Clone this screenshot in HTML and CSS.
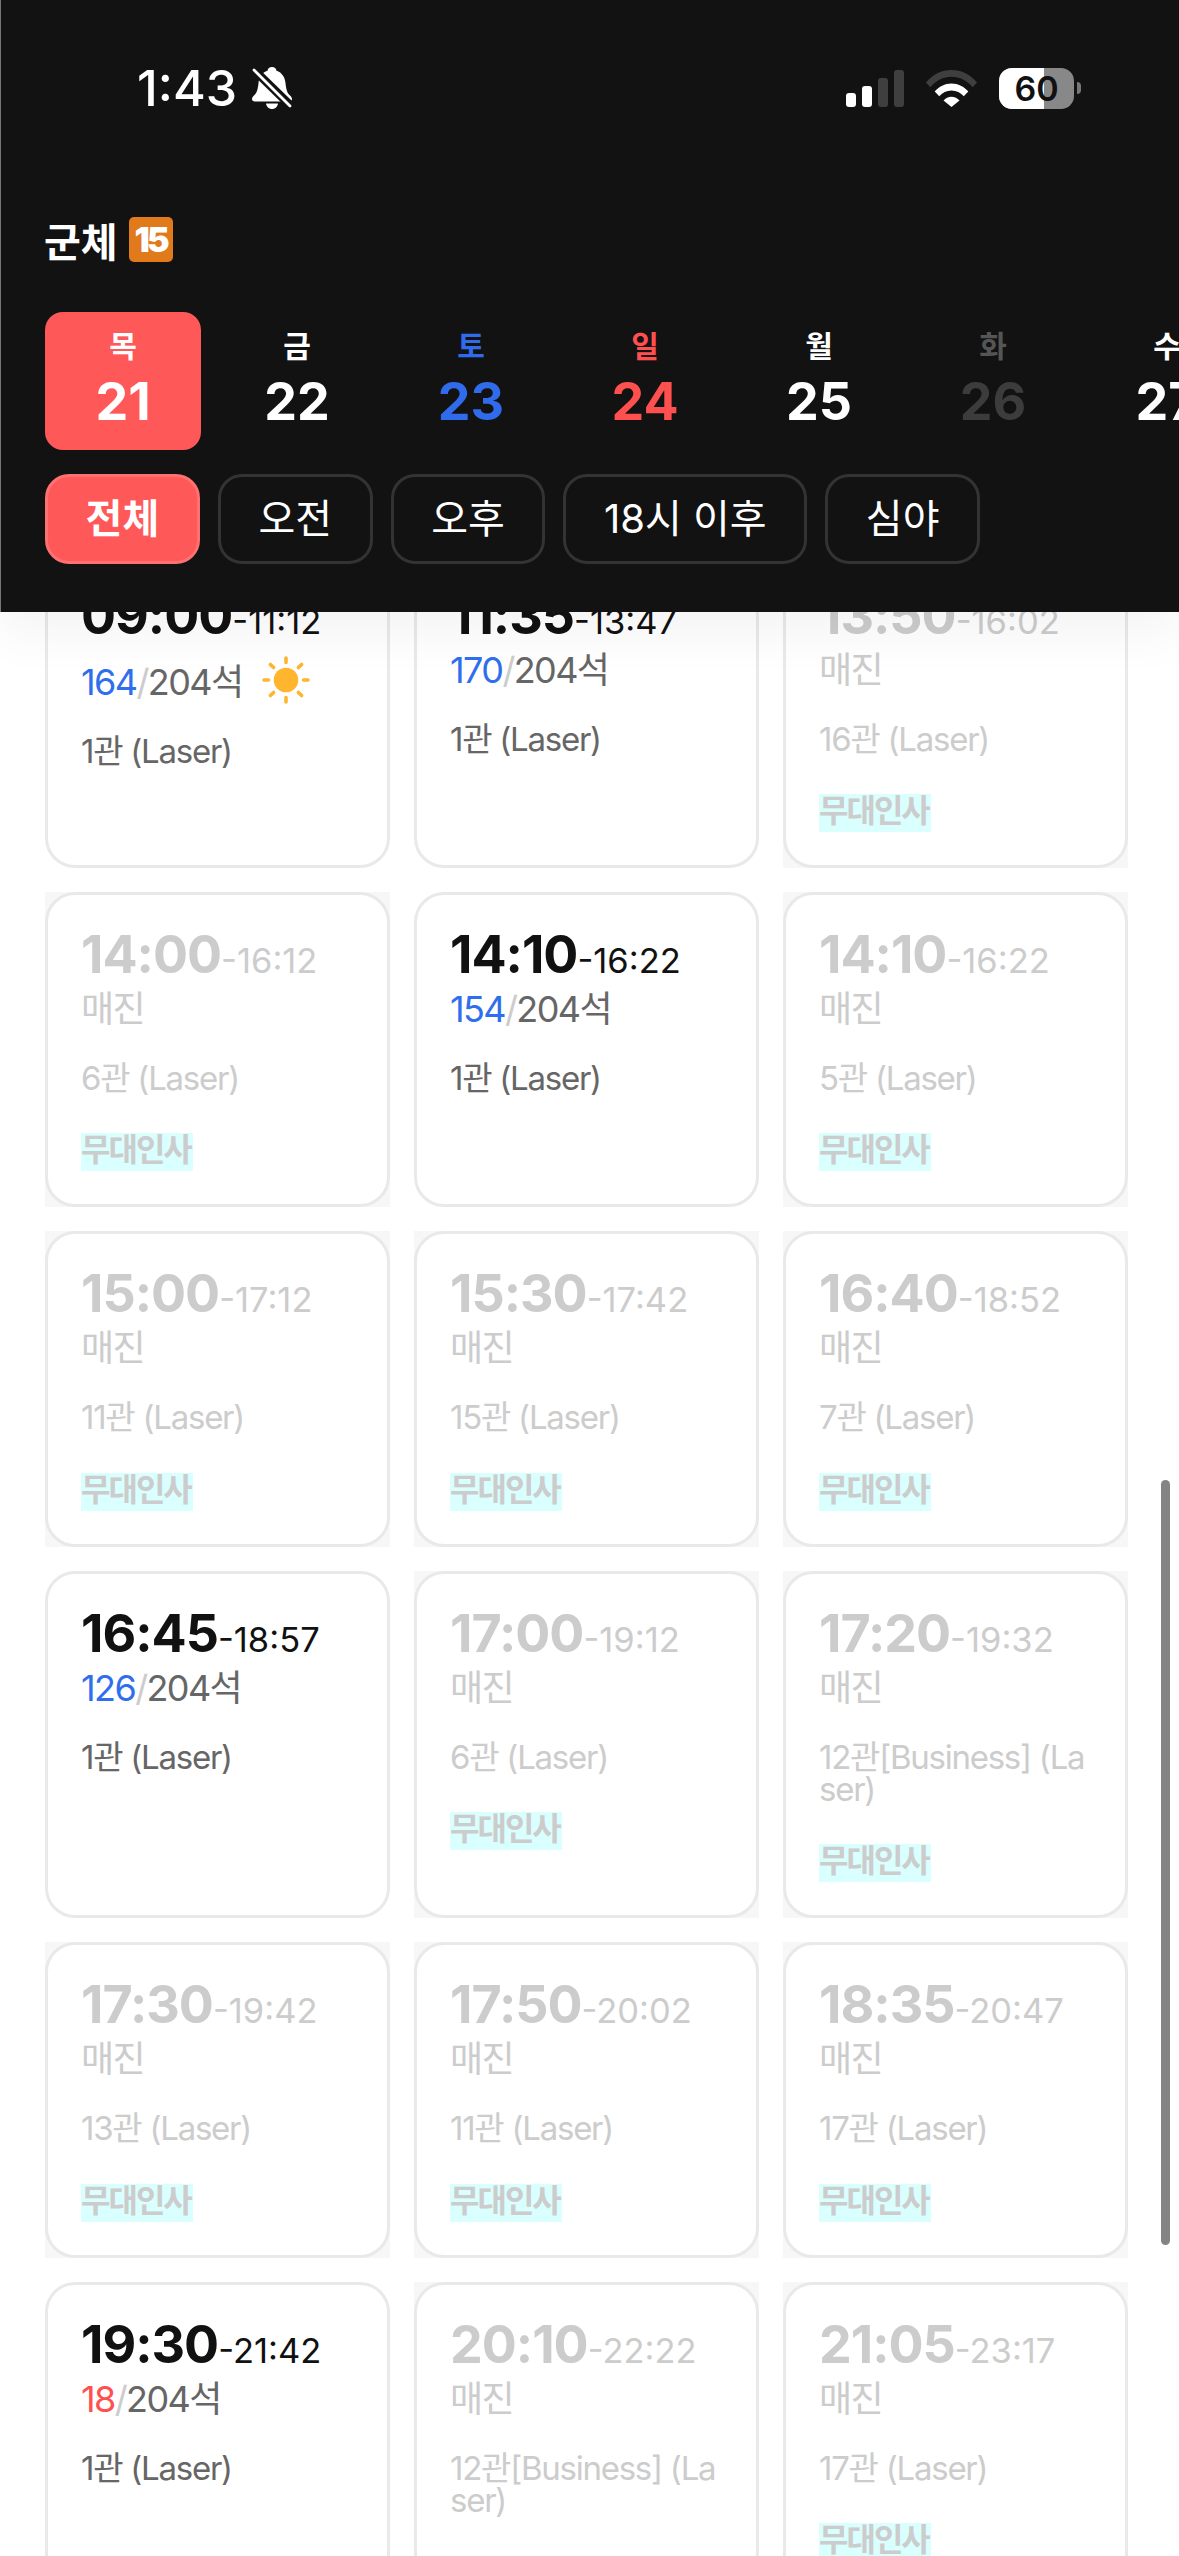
FILE: index.html
```html
<!DOCTYPE html>
<html lang="ko">
<head>
  <meta charset="utf-8">
  <title>상영시간표</title>
  <link rel="stylesheet" href="styles.css">
</head>
<body>
  <div class="page">
    <header class="header">
      <div class="status">
        <div class="status-left">
          <span class="clock">1:43</span>
          <svg class="bell" width="40" height="42" viewBox="0 0 40 42">
            <path fill="#fff" d="M20 0c2.500 0 4.300 1.700 4.500 3.800C30 5.500 33 10.500 33.500 16c.6 6 1.500 9.500 4 12 1.500 1.500 2.500 2.500 2.500 4 0 1.500-1 2.500-2.800 2.500H2.800C1 34.500 0 33.500 0 32c0-1.500 1-2.500 2.500-4 2.500-2.500 3.400-6 4-12C7 10.500 10 5.500 15.500 3.800 15.700 1.700 17.500 0 20 0z"/>
            <path fill="#fff" d="M14 36.500h12c-.5 3.300-3 5.500-6 5.500s-5.500-2.200-6-5.500z"/>
            <path stroke="#121212" stroke-width="8.500" d="M-2 -1l43 42"/>
            <path stroke="#fff" stroke-width="2.800" stroke-linecap="round" d="M2 3l36 36"/>
          </svg>
        </div>
        <div class="status-right">
          <div class="signal">
            <span class="bar bar-1"></span>
            <span class="bar bar-2"></span>
            <span class="bar bar-3"></span>
            <span class="bar bar-4"></span>
          </div>
          <svg width="51" height="37" viewBox="0 0 51 37">
            <path fill="#3f3f3f" d="M0 12.500C6.500 4.500 15.500 0 25.500 0S44.500 4.500 51 12.500l-4.400 4.800C41 10.500 33.700 6.800 25.500 6.800S10 10.500 4.400 17.300z"/>
            <path fill="#fff" d="M8.700 21.500c4.200-5 10.200-8 16.800-8s12.600 3 16.800 8l-4.500 4.800c-3-3.700-7.400-5.900-12.300-5.900s-9.300 2.200-12.300 5.900z"/>
            <path fill="#fff" d="M17.500 30.500c2-2.300 4.900-3.700 8-3.700s6 1.400 8 3.700L25.500 37z"/>
          </svg>
          <div class="battery">
            <div class="battery-body"><span class="battery-fill"></span><span class="battery-num">60</span></div>
            <span class="battery-nub"></span>
          </div>
        </div>
      </div>

      <div class="title">
        <span>군체</span>
        <span class="rating">15</span>
      </div>

      <div class="dates">
        <div class="date active"><span class="day">목</span><span class="num">21</span></div>
        <div class="date"><span class="day">금</span><span class="num">22</span></div>
        <div class="date sat"><span class="day">토</span><span class="num">23</span></div>
        <div class="date sun"><span class="day">일</span><span class="num">24</span></div>
        <div class="date"><span class="day">월</span><span class="num">25</span></div>
        <div class="date off"><span class="day">화</span><span class="num">26</span></div>
        <div class="date"><span class="day">수</span><span class="num">27</span></div>
      </div>

      <div class="tabs">
        <div class="tab active">전체</div>
        <div class="tab">오전</div>
        <div class="tab">오후</div>
        <div class="tab">18시 이후</div>
        <div class="tab">심야</div>
      </div>
    </header>

    <main class="grid">
      <div class="slot"><div class="card">
        <div class="time"><b>09:00</b><span>-11:12</span></div>
        <div class="seats"><span><i>164</i><s>/</s>204석</span>
          <svg class="sun-icon" width="48" height="48" viewBox="0 0 48 48">
            <circle cx="24" cy="24" r="12.300" fill="#ffb52e"/>
            <g stroke="#ffb52e" stroke-width="3.600" stroke-linecap="round">
              <path d="M24 2v4.500M24 41.500V46M2 24h4.500M41.500 24H46M8.400 8.400l3.200 3.200M36.400 36.400l3.200 3.200M8.400 39.600l3.200-3.200M36.400 11.600l3.200-3.200"/>
            </g>
          </svg>
        </div>
        <div class="hall">1관 (Laser)</div>
      </div></div>
      <div class="slot"><div class="card">
        <div class="time"><b>11:35</b><span>-13:47</span></div>
        <div class="seats"><span><i>170</i><s>/</s>204석</span></div>
        <div class="hall">1관 (Laser)</div>
      </div></div>
      <div class="slot soldout"><div class="card">
        <div class="time"><b>13:50</b><span>-16:02</span></div>
        <div class="seats">매진</div>
        <div class="hall">16관 (Laser)</div>
        <div class="tag">무대인사</div>
      </div></div>

      <div class="slot soldout"><div class="card">
        <div class="time"><b>14:00</b><span>-16:12</span></div>
        <div class="seats">매진</div>
        <div class="hall">6관 (Laser)</div>
        <div class="tag">무대인사</div>
      </div></div>
      <div class="slot"><div class="card">
        <div class="time"><b>14:10</b><span>-16:22</span></div>
        <div class="seats"><span><i>154</i><s>/</s>204석</span></div>
        <div class="hall">1관 (Laser)</div>
      </div></div>
      <div class="slot soldout"><div class="card">
        <div class="time"><b>14:10</b><span>-16:22</span></div>
        <div class="seats">매진</div>
        <div class="hall">5관 (Laser)</div>
        <div class="tag">무대인사</div>
      </div></div>

      <div class="slot soldout"><div class="card">
        <div class="time"><b>15:00</b><span>-17:12</span></div>
        <div class="seats">매진</div>
        <div class="hall">11관 (Laser)</div>
        <div class="tag">무대인사</div>
      </div></div>
      <div class="slot soldout"><div class="card">
        <div class="time"><b>15:30</b><span>-17:42</span></div>
        <div class="seats">매진</div>
        <div class="hall">15관 (Laser)</div>
        <div class="tag">무대인사</div>
      </div></div>
      <div class="slot soldout"><div class="card">
        <div class="time"><b>16:40</b><span>-18:52</span></div>
        <div class="seats">매진</div>
        <div class="hall">7관 (Laser)</div>
        <div class="tag">무대인사</div>
      </div></div>

      <div class="slot"><div class="card">
        <div class="time"><b>16:45</b><span>-18:57</span></div>
        <div class="seats"><span><i>126</i><s>/</s>204석</span></div>
        <div class="hall">1관 (Laser)</div>
      </div></div>
      <div class="slot soldout"><div class="card">
        <div class="time"><b>17:00</b><span>-19:12</span></div>
        <div class="seats">매진</div>
        <div class="hall">6관 (Laser)</div>
        <div class="tag">무대인사</div>
      </div></div>
      <div class="slot soldout"><div class="card">
        <div class="time"><b>17:20</b><span>-19:32</span></div>
        <div class="seats">매진</div>
        <div class="hall">12관[Business] (Laser)</div>
        <div class="tag">무대인사</div>
      </div></div>

      <div class="slot soldout"><div class="card">
        <div class="time"><b>17:30</b><span>-19:42</span></div>
        <div class="seats">매진</div>
        <div class="hall">13관 (Laser)</div>
        <div class="tag">무대인사</div>
      </div></div>
      <div class="slot soldout"><div class="card">
        <div class="time"><b>17:50</b><span>-20:02</span></div>
        <div class="seats">매진</div>
        <div class="hall">11관 (Laser)</div>
        <div class="tag">무대인사</div>
      </div></div>
      <div class="slot soldout"><div class="card">
        <div class="time"><b>18:35</b><span>-20:47</span></div>
        <div class="seats">매진</div>
        <div class="hall">17관 (Laser)</div>
        <div class="tag">무대인사</div>
      </div></div>

      <div class="slot"><div class="card">
        <div class="time"><b>19:30</b><span>-21:42</span></div>
        <div class="seats"><span><i class="few">18</i><s>/</s>204석</span></div>
        <div class="hall">1관 (Laser)</div>
      </div></div>
      <div class="slot soldout"><div class="card">
        <div class="time"><b>20:10</b><span>-22:22</span></div>
        <div class="seats">매진</div>
        <div class="hall">12관[Business] (Laser)</div>
        <div class="tag">무대인사</div>
      </div></div>
      <div class="slot soldout"><div class="card">
        <div class="time"><b>21:05</b><span>-23:17</span></div>
        <div class="seats">매진</div>
        <div class="hall">17관 (Laser)</div>
        <div class="tag">무대인사</div>
      </div></div>
    </main>

    <div class="scrollbar"></div>
  </div>
</body>
</html>
```

FILE: styles.css
```css
* {
  box-sizing: border-box;
}

html, body {
  margin: 0;
  padding: 0;
  background-color: #ffffff;
}

body {
  font-family: Inter, "Noto Sans CJK KR", sans-serif;
  color: #111111;
}

.page {
  position: relative;
  width: 1179px;
  height: 2556px;
  overflow: hidden;
}

/* header */

.header {
  position: absolute;
  top: 0;
  left: 0;
  z-index: 2;
  width: 100%;
  height: 612px;
  padding-top: 58px;
  background-color: #121212;
  box-shadow: inset 1px 0 0 #777777, 0 20px 50px rgba(0, 0, 0, 0.05);
  color: #ffffff;
}

.status {
  display: flex;
  justify-content: space-between;
  align-items: center;
  height: 60px;
  padding: 0 98px 0 137px;
}

.status-left {
  display: flex;
  align-items: center;
  gap: 15px;
}

.clock {
  font-size: 50px;
  font-weight: 500;
  line-height: 60px;
}

.status-right {
  display: flex;
  align-items: center;
  gap: 22px;
}

.signal {
  display: flex;
  align-items: flex-end;
  gap: 6px;
  height: 37px;
}

.bar {
  width: 10px;
  border-radius: 3px;
  background-color: #ffffff;
}

.bar-1 { height: 14px; }
.bar-2 { height: 21px; }
.bar-3 { height: 29px; background-color: #3f3f3f; }
.bar-4 { height: 37px; background-color: #3f3f3f; }

.battery {
  display: flex;
  align-items: center;
  gap: 3px;
}

.battery-body {
  position: relative;
  width: 75px;
  height: 41px;
  border-radius: 13px;
  background-color: #888888;
  overflow: hidden;
  text-align: center;
}

.battery-fill {
  position: absolute;
  top: 0;
  left: 0;
  width: 45px;
  height: 100%;
  background-color: #ffffff;
}

.battery-num {
  position: relative;
  font-size: 34px;
  font-weight: 600;
  line-height: 41px;
  color: #111111;
}

.battery-nub {
  width: 4px;
  height: 12px;
  border-radius: 0 6px 6px 0;
  background-color: #777777;
}

.title {
  display: flex;
  align-items: center;
  gap: 11px;
  height: 45px;
  margin-top: 99px;
  padding-left: 44px;
  font-size: 40px;
  font-weight: 600;
}

.rating {
  width: 44px;
  height: 45px;
  border-radius: 5px;
  background-color: #e07a1b;
  font-size: 34px;
  font-weight: 900;
  line-height: 45px;
  letter-spacing: -3px;
  text-align: center;
}

.dates {
  display: flex;
  gap: 18px;
  height: 138px;
  margin-top: 50px;
  padding-left: 45px;
}

.date {
  display: flex;
  flex: 0 0 156px;
  flex-direction: column;
  align-items: center;
  height: 138px;
  padding-top: 16px;
  border-radius: 18px;
}

.date.active {
  background-color: #ff5858;
}

.day {
  font-size: 30px;
  font-weight: 600;
  line-height: 36px;
}

.num {
  margin-top: 7px;
  font-size: 52px;
  font-weight: 700;
  line-height: 62px;
}

.date.sat { color: #2f6bea; }
.date.sun { color: #ff5050; }
.date.off { color: #3c3c3c; }
.date.off .day { color: #555555; }

.tabs {
  display: flex;
  gap: 18px;
  margin-top: 24px;
  padding-left: 45px;
}

.tab {
  height: 90px;
  padding: 0 37.6px;
  border: 3px solid #333333;
  border-radius: 24px;
  font-size: 40px;
  line-height: 84px;
}

.tab.active {
  border-color: #ff7070;
  background-color: #ff5858;
  font-weight: 700;
}

/* showtimes */

.grid {
  display: grid;
  grid-template-columns: repeat(3, 345px);
  gap: 24px;
  padding: 552.6px 0 0 45px;
}

.slot {
  display: flex;
}

/* the grey square behind a sold out card shows only at its corners */
.slot.soldout {
  background-color: #f7f7f7;
  color: #cccccc;
}

.card {
  flex: 1;
  min-width: 0;
  padding: 33px;
  border: 3px solid #e9e9e9;
  border-radius: 30px;
  background-color: #ffffff;
}

.time {
  height: 54px;
  margin-bottom: 9px;
  line-height: 54px;
  white-space: nowrap;
}

.time b {
  font-size: 52px;
  font-weight: 700;
  letter-spacing: -1px;
}

.time span {
  font-size: 34.5px;
  font-weight: 400;
}

.seats {
  display: flex;
  align-items: flex-end;
  gap: 20px;
  min-height: 36px;
  font-size: 36px;
  line-height: 36px;
  letter-spacing: -1.6px;
  color: #cccccc;
}

.seats span {
  color: #666666;
}

.seats i {
  font-style: normal;
  color: #2f6fed;
}

.seats i.few {
  color: #ff5050;
}

.seats s {
  text-decoration: none;
  color: #cccccc;
}

.sun-icon {
  margin-top: 4px;
  margin-bottom: -4px;
}

.hall {
  margin-top: 35px;
  font-size: 33px;
  line-height: 32.5px;
  letter-spacing: -1.25px;
  word-break: break-all;
  color: #666666;
}

.soldout .hall {
  color: #cccccc;
}

.tag {
  width: 112px;
  height: 38px;
  margin-top: 38.83px;
  background-color: #d9ffff;
  font-size: 32px;
  font-weight: 700;
  line-height: 33px;
  letter-spacing: -2px;
  white-space: nowrap;
  color: #cccccc;
}

.scrollbar {
  position: absolute;
  top: 1480px;
  left: 1161px;
  width: 9px;
  height: 765px;
  border-radius: 5px;
  background-color: #848484;
}
```
